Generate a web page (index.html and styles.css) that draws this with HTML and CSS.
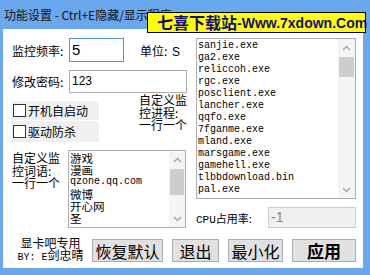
FILE: index.html
```html
<!DOCTYPE html>
<html lang="zh-CN">
<head>
    <meta charset="UTF-8">
    <title>功能设置</title>
    <link rel="stylesheet" href="styles.css">
</head>
<body>
    <div class="window">
        <div class="titlebar">功能设置 - Ctrl+E隐藏/显示程序</div>
        <div class="banner"><span class="banner-cn">七喜下载站</span><span class="banner-en">-Www.7xdown.Com</span></div>

        <div class="client">
            <div class="main">
                <div class="left">
                    <div class="row">
                        <span class="label">监控频率:</span>
                        <div class="input freq-input">5</div>
                        <span class="unit">单位: <span class="unit-s">S</span></span>
                    </div>
                    <div class="row pass-row">
                        <span class="label">修改密码:</span>
                        <div class="input pass-input">123</div>
                    </div>
                    <div class="row opts-row">
                        <div class="checks">
                            <div class="check"><span class="box"></span>开机自启动</div>
                            <div class="check"><span class="box"></span>驱动防杀</div>
                        </div>
                        <div class="stack">自定义监<br>控进程:<br>一行一个</div>
                    </div>
                    <div class="row words-row">
                        <div class="stack">自定义监<br>控词语:<br>一行一个</div>
                        <div class="textbox words">
                            <div class="lines">
                                <div>游戏</div>
                                <div>漫画</div>
                                <div class="latin">qzone.qq.com</div>
                                <div>微博</div>
                                <div>开心网</div>
                                <div>圣</div>
                            </div>
                            <div class="scrollbar small">
                                <div class="arrow"><svg width="9" height="6" viewBox="0 0 9 6"><path d="M1 5 L4.5 1.5 L8 5" fill="none" stroke="#a6a6a6" stroke-width="1.5"/></svg></div>
                                <div class="thumb words-thumb"></div>
                                <div class="arrow bottom"><svg width="9" height="6" viewBox="0 0 9 6"><path d="M1 1 L4.5 4.5 L8 1" fill="none" stroke="#a6a6a6" stroke-width="1.5"/></svg></div>
                            </div>
                        </div>
                    </div>
                </div>

                <div class="right">
                    <div class="textbox procs">
                        <div class="lines">
                            <div>sanjie.exe</div>
                            <div>ga2.exe</div>
                            <div>reliccoh.exe</div>
                            <div>rgc.exe</div>
                            <div>posclient.exe</div>
                            <div>lancher.exe</div>
                            <div>qqfo.exe</div>
                            <div>7fganme.exe</div>
                            <div>mland.exe</div>
                            <div>marsgame.exe</div>
                            <div>gamehell.exe</div>
                            <div>tlbbdownload.bin</div>
                            <div>pal.exe</div>
                        </div>
                        <div class="scrollbar">
                            <div class="arrow"><svg width="9" height="6" viewBox="0 0 9 6"><path d="M1 5 L4.5 1.5 L8 5" fill="none" stroke="#a6a6a6" stroke-width="1.5"/></svg></div>
                            <div class="thumb"></div>
                            <div class="arrow bottom"><svg width="9" height="6" viewBox="0 0 9 6"><path d="M1 1 L4.5 4.5 L8 1" fill="none" stroke="#a6a6a6" stroke-width="1.5"/></svg></div>
                        </div>
                    </div>
                    <div class="row cpu-row">
                        <span class="cpu-label"><span class="latin">CPU</span>占用率:</span>
                        <div class="input cpu-input">-1</div>
                    </div>
                </div>
            </div>

            <div class="footer">
                <div class="credit">显卡吧专用<br><span class="latin">BY: E</span>剑忠晴</div>
                <button class="btn btn-reset">恢复默认</button>
                <button class="btn btn-exit">退出</button>
                <button class="btn btn-min">最小化</button>
                <button class="btn btn-apply">应用</button>
            </div>
        </div>
    </div>
</body>
</html>
```

FILE: styles.css
```css
* {
    box-sizing: border-box;
}
body {
    margin: 0;
    font-family: "Noto Sans CJK SC", "Liberation Sans", sans-serif;
    font-size: 12px;
    color: #000;
}
.window {
    position: relative;
    width: 370px;
    height: 275px;
    background: #6aa8ee;
    display: flex;
    flex-direction: column;
    overflow: hidden;
}
.titlebar {
    height: 29px;
    line-height: 29px;
    padding-left: 4px;
    color: #111;
    white-space: nowrap;
}
.banner {
    position: absolute;
    left: 147px;
    top: 12px;
    width: 219px;
    height: 21px;
    background: #ffff00;
    border: 1px solid #000;
    padding-left: 9px;
    display: flex;
    align-items: center;
    color: #0e0e80;
    white-space: nowrap;
}
.banner-cn {
    font-size: 16px;
    font-weight: bold;
    line-height: 19px;
}
.banner-en {
    font: bold 14px "Liberation Sans", sans-serif;
}
.client {
    flex: 1;
    margin: 0 7px 7px 3px;
    background: #fff;
    padding: 9px 7px 0 9px;
}
.main {
    display: flex;
    gap: 9px;
}
.left {
    width: 175px;
}
.right {
    width: 160px;
}
.row {
    display: flex;
    align-items: center;
}
.label {
    width: 57px;
    white-space: nowrap;
}
.latin {
    font-family: "Liberation Mono", monospace;
    font-size: 10px;
}
.input {
    height: 24px;
    border: 1px solid #ababab;
    padding: 0 2px;
    line-height: 22px;
    font-size: 13px;
    white-space: nowrap;
}
.freq-input {
    width: 55px;
    border-color: #4d95e6;
    font-family: "Liberation Sans", sans-serif;
    font-size: 15px;
}
.unit {
    margin-left: 16px;
    white-space: nowrap;
}
.unit-s {
    font-family: "Liberation Sans", sans-serif;
    font-size: 12px;
    margin-left: 2px;
}
.pass-row {
    margin-top: 8px;
}
.pass-input {
    width: 118px;
    height: 23px;
    line-height: 21px;
    font-family: "Liberation Sans", sans-serif;
    font-size: 12px;
}
.opts-row {
    margin-top: 1px;
    align-items: flex-start;
}
.checks {
    width: 88px;
    margin-top: 7px;
    display: flex;
    flex-direction: column;
    gap: 1px;
}
.check {
    height: 19px;
    background: #f0f0f0;
    display: flex;
    align-items: center;
    gap: 2px;
    padding-left: 1px;
    white-space: nowrap;
}
.check + .check {
    height: 21px;
}
.box {
    width: 13px;
    height: 13px;
    border: 1px solid #333;
    background: #fff;
}
.stack {
    line-height: 12.5px;
    white-space: nowrap;
}
.opts-row .stack {
    margin-left: 40px;
}
.words-row {
    margin-top: 8px;
    align-items: flex-start;
}
.words-row .stack {
    width: 56px;
    padding-top: 2px;
}
.textbox {
    display: flex;
    border: 1px solid #abadb3;
    background: #fff;
}
.words {
    width: 118px;
    height: 78px;
}
.words .lines {
    font-size: 11.5px;
    padding-top: 1px;
}
.lines {
    flex: 1;
    overflow: hidden;
    line-height: 12px;
    padding-left: 1px;
    white-space: nowrap;
}
.procs {
    height: 161px;
}
.procs .lines {
    font: 10px/12px "Liberation Mono", monospace;
    padding: 1px 0 0 1px;
}
.scrollbar {
    width: 17px;
    background: #f4f4f4;
    display: flex;
    flex-direction: column;
}
.scrollbar.small {
    width: 16px;
}
.arrow {
    height: 17px;
    display: flex;
    align-items: center;
    justify-content: center;
}
.arrow.bottom {
    margin-top: auto;
}
.thumb {
    height: 20px;
    margin: 1px 1px 0;
    background: #cdcdcd;
}
.words-thumb {
    height: 26px;
}
.cpu-row {
    margin-top: 8px;
}
.cpu-label {
    width: 72px;
    font-size: 11px;
    white-space: nowrap;
}
.cpu-label .latin {
    font-size: 11px;
}
.cpu-input {
    width: 88px;
    height: 21px;
    line-height: 19px;
    background: #f0f0f0;
    border-color: #cccccc;
    color: #8a8a8a;
    font-family: "Liberation Sans", sans-serif;
    font-size: 14px;
}
.footer {
    display: flex;
    align-items: center;
    gap: 9px;
    margin-top: 9px;
}
.credit {
    width: 71px;
    margin-left: 3px;
    margin-right: -3px;
    text-align: center;
    line-height: 12px;
    white-space: nowrap;
}
.btn {
    height: 23px;
    padding: 0;
    border: 1px solid #adadad;
    background: #e1e1e1;
    font-family: "Noto Sans CJK SC", sans-serif;
    font-size: 16px;
    line-height: 20px;
    color: #000;
}
.btn-reset {
    width: 71px;
}
.btn-exit {
    width: 47px;
}
.btn-min {
    width: 55px;
}
.btn-apply {
    width: 64px;
    font-weight: bold;
    font-size: 17px;
}
```
